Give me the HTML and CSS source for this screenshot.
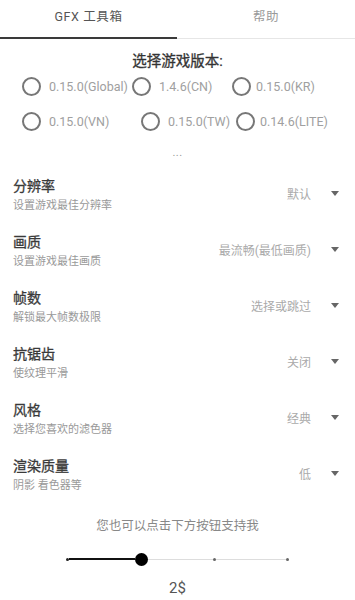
FILE: index.html
```html
<!DOCTYPE html>
<html lang="zh">
<head>
<meta charset="utf-8">
<link rel="stylesheet" href="styles.css">
</head>
<body>
<div class="app">
  <div class="tabs">
    <div class="tab active">GFX 工具箱</div>
    <div class="tab">帮助</div>
  </div>

  <div class="version-title">选择游戏版本:</div>
  <div class="radios">
    <div class="radio-row">
      <div class="radio w110"><span class="circle"></span><span class="label">0.15.0(Global)</span></div>
      <div class="radio w100"><span class="circle"></span><span class="label">1.4.6(CN)</span></div>
      <div class="radio"><span class="circle"></span><span class="label tight">0.15.0(KR)</span></div>
    </div>
    <div class="radio-row">
      <div class="radio w119"><span class="circle"></span><span class="label">0.15.0(VN)</span></div>
      <div class="radio w95"><span class="circle"></span><span class="label">0.15.0(TW)</span></div>
      <div class="radio"><span class="circle"></span><span class="label tight">0.14.6(LITE)</span></div>
    </div>
  </div>
  <div class="more">...</div>

  <div class="settings">
    <div class="setting">
      <div class="setting-text"><div class="setting-title">分辨率</div><div class="setting-sub">设置游戏最佳分辨率</div></div>
      <div class="setting-value">默认</div><span class="caret"></span>
    </div>
    <div class="setting">
      <div class="setting-text"><div class="setting-title">画质</div><div class="setting-sub">设置游戏最佳画质</div></div>
      <div class="setting-value">最流畅(最低画质)</div><span class="caret"></span>
    </div>
    <div class="setting">
      <div class="setting-text"><div class="setting-title">帧数</div><div class="setting-sub">解锁最大帧数极限</div></div>
      <div class="setting-value">选择或跳过</div><span class="caret"></span>
    </div>
    <div class="setting">
      <div class="setting-text"><div class="setting-title">抗锯齿</div><div class="setting-sub">使纹理平滑</div></div>
      <div class="setting-value">关闭</div><span class="caret"></span>
    </div>
    <div class="setting">
      <div class="setting-text"><div class="setting-title">风格</div><div class="setting-sub">选择您喜欢的滤色器</div></div>
      <div class="setting-value">经典</div><span class="caret"></span>
    </div>
    <div class="setting">
      <div class="setting-text"><div class="setting-title">渲染质量</div><div class="setting-sub">阴影 看色器等</div></div>
      <div class="setting-value">低</div><span class="caret"></span>
    </div>
  </div>

  <div class="support">您也可以点击下方按钮支持我</div>
  <div class="slider">
    <span class="dot dark"></span>
    <span class="seg filled s66"></span>
    <span class="thumb"></span>
    <span class="seg s65"></span>
    <span class="dot"></span>
    <span class="seg s70"></span>
    <span class="dot"></span>
  </div>
  <div class="amount">2$</div>
</div>
</body>
</html>
```

FILE: styles.css
```css
* { box-sizing: border-box; }
html, body { margin: 0; padding: 0; background: #fff; }
body {
  font-family: "Roboto", "Noto Sans CJK SC", sans-serif;
  color: #333;
  width: 355px;
  overflow: hidden;
}
.app { width: 355px; }

.tabs { display: flex; align-items: flex-end; }
.tab {
  flex: 0 0 auto;
  text-align: center;
  font-size: 12.5px;
  line-height: 16px;
  padding: 9px 0 12px;
  letter-spacing: 0.6px;
}
.tab.active { width: 177px; color: #555; border-bottom: 2px solid #3a3a3a; }
.tab:not(.active) { width: 178px; color: #999; border-bottom: 1px solid #e6e6e6; padding-bottom: 13px; }

.version-title {
  margin-top: 13px;
  text-align: center;
  font-size: 14.5px;
  line-height: 20px;
  font-weight: 400;
  color: #333;
  -webkit-text-stroke: 0.3px #333;
}
.radios { margin-top: 3px; display: flex; flex-direction: column; gap: 13px; }
.radio-row { display: flex; align-items: center; padding-left: 22px; height: 22px; }
.radio { display: flex; align-items: center; flex: 0 0 auto; }
.w110 { width: 110px; }
.w100 { width: 100px; }
.w119 { width: 119px; }
.w95 { width: 95px; }
.circle {
  width: 19px; height: 19px;
  border: 2px solid #777;
  border-radius: 50%;
  flex: 0 0 auto;
  margin-right: 8px;
}
.label { font-size: 12.5px; color: #a0a0a0; white-space: nowrap; }
.label.tight { margin-left: -3px; }

.more {
  margin-top: 14px;
  text-align: center;
  font-size: 11px;
  line-height: 14px;
  color: #999;
  letter-spacing: 0.5px;
}

.settings { margin-top: 8px; }
.setting {
  display: flex;
  align-items: center;
  height: 56px;
  padding: 8px 16px 8px 13px;
}
.setting-text { flex: 1 1 auto; }
.setting-title { font-size: 14px; line-height: 20px; font-weight: 400; color: #3a3a3a; -webkit-text-stroke: 0.3px #3a3a3a; }
.setting-sub { font-size: 11px; line-height: 20px; color: #999; }
.setting-value { font-size: 12px; color: #aaa; margin-bottom: 6px; margin-right: 20px; white-space: nowrap; }
.caret {
  width: 0; height: 0;
  border-left: 4.5px solid transparent;
  border-right: 4.5px solid transparent;
  border-top: 5px solid #666;
  margin-bottom: 6px;
}

.support {
  margin-top: 12px;
  text-align: center;
  font-size: 12.5px;
  line-height: 20px;
  color: #888;
}
.slider {
  margin-top: 13px;
  height: 20px;
  display: flex;
  align-items: center;
  justify-content: center;
}
.dot { width: 3px; height: 3px; border-radius: 50%; background: #666; flex: 0 0 auto; }
.dot.dark { background: #222; }
.seg { height: 1px; background: #ddd; flex: 0 0 auto; }
.seg.filled { height: 2px; background: #111; }
.s66 { width: 66px; }
.s65 { width: 65px; }
.s70 { width: 70px; }
.thumb { width: 13px; height: 13px; border-radius: 50%; background: #000; flex: 0 0 auto; }

.amount {
  margin-top: 9px;
  text-align: center;
  font-size: 15px;
  line-height: 20px;
  color: #555;
}
```
